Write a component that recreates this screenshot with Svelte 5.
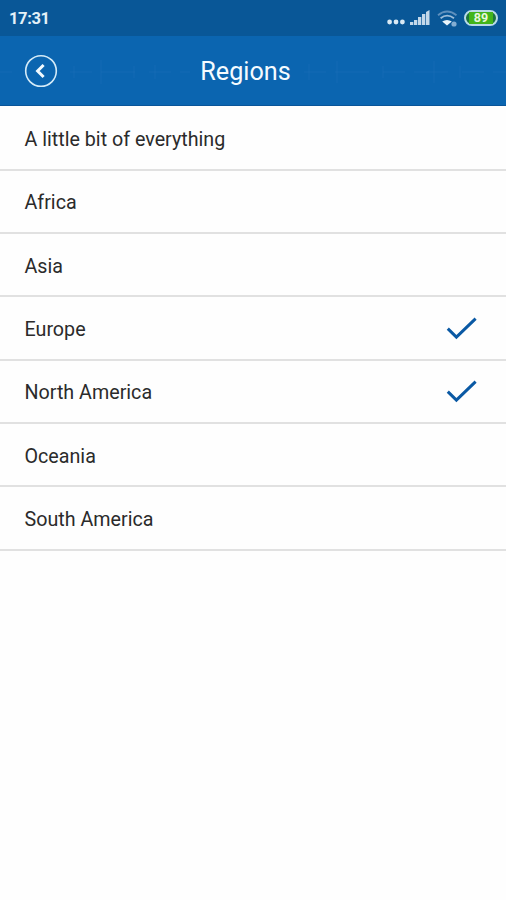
<script lang="ts">
  type Region = { name: string; selected: boolean };

  let regions: Region[] = $state([
    { name: "A little bit of everything", selected: false },
    { name: "Africa", selected: false },
    { name: "Asia", selected: false },
    { name: "Europe", selected: true },
    { name: "North America", selected: true },
    { name: "Oceania", selected: false },
    { name: "South America", selected: false },
  ]);

  const toggle = (region: Region) => {
    region.selected = !region.selected;
  };
</script>

<div class="screen">
  <div class="status">
    <span class="time">17:31</span>
    <div class="indicators">
      <svg class="dots" width="18" height="6" viewBox="0 0 18 6" fill="#d9e9f4">
        <circle cx="2.6" cy="3" r="2.4" />
        <circle cx="9" cy="3" r="2.4" />
        <circle cx="15.4" cy="3" r="2.4" />
      </svg>
      <svg class="signal" width="20" height="15" viewBox="0 0 20 15" fill="#c3d8ea">
        <rect x="0" y="12" width="3.3" height="3" />
        <rect x="4" y="10" width="3.3" height="5" />
        <rect x="8" y="7" width="3.3" height="8" />
        <rect x="12" y="4" width="3.3" height="11" />
        <path d="M16 2 L19.5 0 V15 H16 Z" />
      </svg>
      <svg class="wifi" width="21" height="17" viewBox="0 0 21 17" fill="none">
        <path d="M1 5.2 Q10 -2.2 19.5 5.2" stroke="#5f90bd" stroke-width="1.8" />
        <path d="M3.6 8.3 Q10 3 17 8.3" stroke="#9bbcd8" stroke-width="1.8" />
        <path d="M5.2 11.6 Q10 8.4 14.8 11.6 L10 15.6 Z" fill="#e9f4fa" />
        <circle cx="17" cy="14" r="2.6" fill="#83add2" />
      </svg>
      <div class="battery">
        <span class="level">89</span>
      </div>
    </div>
  </div>

  <header>
    <svg class="wave" width="506" height="40" viewBox="0 0 506 40" fill="none" stroke="#2b79be">
      <path d="M0 20 H12 M70 20 H190 M304 20 H506" stroke-dasharray="22 9 34 14" />
      <path d="M74 14 V26 M101 8 V32 M134 14 V26 M155 13 V27 M309 12 V28 M337 9 V31 M383 14 V26 M434 9 V31 M460 14 V26" />
    </svg>
    <button class="back" aria-label="Back">
      <svg width="34" height="34" viewBox="0 0 34 34" fill="none">
        <circle cx="17" cy="17" r="15.3" stroke="#d4ebf8" stroke-width="1.6" />
        <path d="M19.6 11 L13.6 17 L19.6 23" stroke="#f2faff" stroke-width="3" />
      </svg>
    </button>
    <h1>Regions</h1>
  </header>

  <ul>
    {#each regions as region}
      <li>
        <button class="row" onclick={() => toggle(region)}>
          <span>{region.name}</span>
          {#if region.selected}
            <svg width="32" height="24" viewBox="0 0 32 24" fill="none">
              <path d="M1.8 11.6 L10.4 20.1 L29.6 1.6" stroke="#0a59a4" stroke-width="3" />
            </svg>
          {/if}
        </button>
      </li>
    {/each}
  </ul>
</div>

<style>
  :global(body) {
    margin: 0;
    background: #fefefe;
  }

  .screen {
    height: 900px;
    overflow: hidden;
    background: #fefefe;
    font-family: Roboto, sans-serif;
  }

  .status {
    display: flex;
    justify-content: space-between;
    box-sizing: border-box;
    height: 36px;
    padding: 0 8px 0 9px;
    background: #095797;
  }

  .time {
    color: #e3f1f8;
    font-size: 16.5px;
    font-weight: 700;
    line-height: 38px;
    letter-spacing: -0.4px;
  }

  .indicators {
    display: flex;
    align-items: flex-start;
  }

  .dots {
    margin: 19px 5px 0 0;
  }

  .signal {
    margin: 10px 7px 0 0;
  }

  .wifi {
    margin: 10px 6px 0 0;
  }

  .battery {
    box-sizing: border-box;
    width: 34px;
    height: 16px;
    margin-top: 10px;
    padding: 0 3px;
    border: 2px solid #b9dbe6;
    border-radius: 8px;
    background: #1d753c;
  }

  .level {
    display: block;
    height: 12px;
    background: #42b51b;
    color: #e9f8dd;
    font-size: 12.5px;
    font-weight: 700;
    line-height: 12px;
    text-align: center;
  }

  header {
    display: grid;
    grid-template-columns: 58px 1fr 73px;
    align-items: center;
    position: relative;
    box-sizing: border-box;
    height: 70px;
    border-bottom: 1px solid #0a5599;
    background: #0b65b0;
  }

  .wave {
    position: absolute;
    top: 16px;
    left: 0;
    opacity: 0.3;
  }

  button {
    border: 0;
    background: none;
    font: inherit;
    cursor: pointer;
  }

  .back {
    position: relative;
    height: 34px;
    padding: 0 0 0 24px;
  }

  .back svg {
    display: block;
  }

  h1 {
    margin: 2px 0 0;
    color: #f4fbff;
    font-size: 25.2px;
    font-weight: 400;
    line-height: 30px;
    text-align: center;
  }

  ul {
    margin: 0;
    padding: 0;
    list-style: none;
  }

  li {
    box-sizing: border-box;
    height: 63.33px;
    border-bottom: 2px solid #e1e1e1;
  }

  li:first-child {
    height: 64.6px;
  }

  .row {
    display: flex;
    align-items: center;
    justify-content: space-between;
    width: 100%;
    height: 100%;
    padding: 3px 28px 0 24.5px;
    color: #2b2b2b;
    font-size: 19.7px;
    text-align: left;
  }

  .row svg {
    margin-top: -1px;
  }

  li:first-child .row {
    padding-top: 4px;
  }
</style>
